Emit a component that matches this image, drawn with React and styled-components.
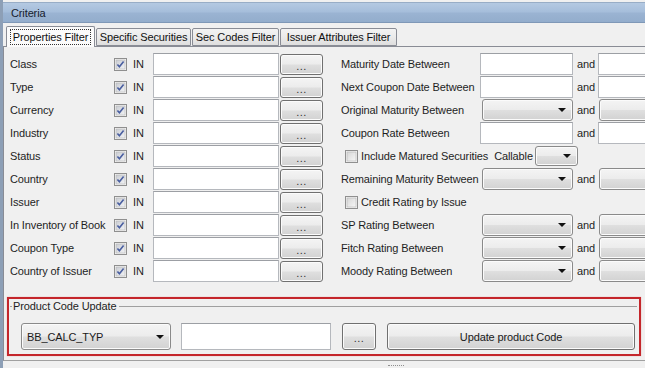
import React from "react";
import styled, { createGlobalStyle } from "styled-components";

const GlobalStyle = createGlobalStyle`
  html, body {
    margin: 0;
    padding: 0;
    background: #f0f0f0;
  }
  body {
    font-family: "Liberation Sans", Arial, sans-serif;
    font-size: 11px;
    letter-spacing: -0.12px;
    color: #1e1e1e;
  }
`;

const Frame = styled.div`
  width: 645px;
  height: 368px;
  box-sizing: border-box;
  overflow: hidden;
  padding-top: 2px;
  border-left: 3px solid #8d9fb6;
  background: #f0f0f0;
`;

const TitleBar = styled.div`
  height: 19px;
  display: flex;
  align-items: center;
  padding-left: 8px;
  border-top: 1px solid #98adc6;
  border-bottom: 1px solid #7f98b7;
  background: linear-gradient(#b4c9e2, #a6bedb 45%, #9ab3d2 55%, #93adcc);
  color: #17212d;
`;

const TabStrip = styled.div`
  display: flex;
  align-items: flex-end;
  gap: 1px;
  height: 20px;
  margin-top: 3px;
  padding-left: 3px;
`;

const Tab = styled.div`
  position: relative;
  z-index: 1;
  box-sizing: border-box;
  width: ${(p) => p.$w}px;
  height: ${(p) => (p.$active ? 21 : 18)}px;
  margin-bottom: ${(p) => (p.$active ? -1 : 0)}px;
  border: 1px solid #898c95;
  border-bottom: ${(p) => (p.$active ? "none" : "1px solid #898c95")};
  border-radius: 2px 2px 0 0;
  background: ${(p) =>
    p.$active ? "#fbfbfb" : "linear-gradient(#f3f3f3, #ebebeb 50%, #dedede)"};
  display: flex;
  align-items: center;
  justify-content: center;
  padding-bottom: ${(p) => (p.$active ? 1 : 0)}px;
  white-space: nowrap;
  color: #111;
`;

const FocusText = styled.span`
  outline: 1px dotted #333;
  outline-offset: 1px;
  padding: 0 1px;
`;

const TabBody = styled.div`
  box-sizing: border-box;
  height: 315px;
  border-top: 1px solid #898c95;
  border-left: 1px solid #898c95;
  border-bottom: 1px solid #a0a0a0;
  padding: 6px 0 0 3px;
`;

const Columns = styled.div`
  display: flex;
  padding-left: 3px;
`;

const Column = styled.div`
  display: flex;
  flex-direction: column;
  gap: 1px;
  margin-left: ${(p) => p.$ml || 0}px;
`;

const Row = styled.div`
  display: flex;
  align-items: center;
  height: 22px;
  white-space: nowrap;
`;

const FieldLabel = styled.span`
  width: ${(p) => p.$w}px;
  flex: none;
  white-space: nowrap;
  overflow: visible;
`;

const Plain = styled.span`
  margin-left: ${(p) => p.$ml || 0}px;
  flex: none;
`;

const InText = styled.span`
  width: 14px;
  margin-left: 6px;
  flex: none;
`;

const TextInput = styled.div`
  box-sizing: border-box;
  flex: none;
  width: ${(p) => p.$w}px;
  height: ${(p) => p.$h || 22}px;
  margin-left: ${(p) => p.$ml || 0}px;
  background: #fff;
  border: 1px solid #b5b8bd;
  border-top-color: #9c9fa4;
`;

const Btn = styled.div`
  box-sizing: border-box;
  flex: none;
  width: ${(p) => p.$w}px;
  height: ${(p) => p.$h || 21}px;
  margin-left: ${(p) => p.$ml || 0}px;
  border: 1px solid #707070;
  border-radius: 3px;
  background: linear-gradient(#f4f4f4, #ececec 48%, #dfdfdf 52%, #d2d2d2);
  box-shadow: inset 0 0 0 1px #fbfbfb;
  display: flex;
  align-items: center;
  justify-content: center;
  color: #1a1a1a;
  white-space: nowrap;
`;

const Dots = styled.span`
  padding-top: 3px;
  letter-spacing: 0.5px;
  color: #333;
`;

const ComboBox = styled(Btn)`
  justify-content: space-between;
  padding: 0 6px 0 5px;
  border-color: #8a8a8a;
`;

const Arrow = styled.span`
  width: 0;
  height: 0;
  border-left: 4px solid transparent;
  border-right: 4px solid transparent;
  border-top: 4px solid #111;
  margin-left: auto;
`;

const And = styled.span`
  width: 21px;
  padding-left: 4px;
  flex: none;
`;

const RedFrame = styled.div`
  box-sizing: border-box;
  width: 634px;
  height: 59px;
  margin-top: 15px;
  border: 2px solid #c4262b;
  box-shadow: 0 0 1px #e89a9c;
`;

const Legend = styled.div`
  display: flex;
  align-items: center;
  height: 14px;
  padding-left: 1px;
  margin-right: 2px;

  &::before {
    content: "";
    width: 2px;
    border-top: 1px solid #a0a0a0;
    margin-right: 1px;
  }
  &::after {
    content: "";
    flex: 1;
    border-top: 1px solid #a0a0a0;
    margin-left: 2px;
  }
`;

const ControlsRow = styled.div`
  display: flex;
  align-items: center;
  margin-top: 10px;
  padding-left: 12px;
`;

const Grip = styled.div`
  width: 16px;
  margin: 4px 0 0 385px;
  border-top: 1px dotted #8f8f8f;
`;

const CheckBox = ({ checked, ml = 0 }) => (
  <svg width="13" height="13" viewBox="0 0 13 13" style={{ marginLeft: ml, flex: "none" }}>
    <defs>
      <linearGradient id={checked ? "cbOn" : "cbOff"} x1="0" y1="0" x2="1" y2="1">
        <stop offset="0" stopColor={checked ? "#c9ccd2" : "#d6d6d6"} />
        <stop offset="1" stopColor={checked ? "#f2f3f5" : "#f7f7f7"} />
      </linearGradient>
    </defs>
    <rect x="0.5" y="0.5" width="12" height="12" fill="#f4f4f4" stroke="#8f8f8f" />
    <rect x="2" y="2" width="9" height="9" fill={`url(#${checked ? "cbOn" : "cbOff"})`} stroke="#b4b4b4" strokeWidth="0.6" />
    {checked && (
      <path d="M3.4 6.4 L5.4 8.8 L9.6 3.4" fill="none" stroke="#4a5fa0" strokeWidth="1.6" />
    )}
  </svg>
);

const leftRows = [
  "Class",
  "Type",
  "Currency",
  "Industry",
  "Status",
  "Country",
  "Issuer",
  "In Inventory of Book",
  "Coupon Type",
  "Country of Issuer",
];

const rightRows = [
  { kind: "input", label: "Maturity Date Between" },
  { kind: "input", label: "Next Coupon Date Between" },
  { kind: "combo", label: "Original Maturity Between" },
  { kind: "input", label: "Coupon Rate Between" },
  { kind: "matured" },
  { kind: "combo", label: "Remaining Maturity Between" },
  { kind: "check", label: "Credit Rating by Issue" },
  { kind: "combo", label: "SP Rating Between" },
  { kind: "combo", label: "Fitch Rating Between" },
  { kind: "combo", label: "Moody Rating Between" },
];

const tabs = [
  { name: "Properties Filter", w: 89, active: true },
  { name: "Specific Securities", w: 95 },
  { name: "Sec Codes Filter", w: 87 },
  { name: "Issuer Attributes Filter", w: 117 },
];

const Combo = ({ w, h, ml, children }) => (
  <ComboBox $w={w} $h={h} $ml={ml}>
    {children}
    <Arrow />
  </ComboBox>
);

const RightRow = ({ row }) => {
  if (row.kind === "input") {
    return (
      <Row>
        <FieldLabel $w={139}>{row.label}</FieldLabel>
        <TextInput $w={93} />
        <And>and</And>
        <TextInput $w={93} />
      </Row>
    );
  }
  if (row.kind === "combo") {
    return (
      <Row>
        <FieldLabel $w={141}>{row.label}</FieldLabel>
        <Combo w={91} h={22} />
        <And>and</And>
        <Combo w={91} h={22} ml={1} />
      </Row>
    );
  }
  if (row.kind === "matured") {
    return (
      <Row>
        <CheckBox ml={4} />
        <Plain $ml={3}>Include Matured Securities</Plain>
        <Plain $ml={6}>Callable</Plain>
        <Combo w={43} h={20} ml={2} />
      </Row>
    );
  }
  return (
    <Row>
      <CheckBox ml={4} />
      <Plain $ml={3}>{row.label}</Plain>
    </Row>
  );
};

export default function App() {
  return (
    <>
      <GlobalStyle />
      <Frame>
        <TitleBar>Criteria</TitleBar>
        <TabStrip>
          {tabs.map((t) => (
            <Tab key={t.name} $w={t.w} $active={t.active}>
              {t.active ? <FocusText>{t.name}</FocusText> : t.name}
            </Tab>
          ))}
        </TabStrip>
        <TabBody>
          <Columns>
            <Column>
              {leftRows.map((label) => (
                <Row key={label}>
                  <FieldLabel $w={104}>{label}</FieldLabel>
                  <CheckBox checked />
                  <InText>IN</InText>
                  <TextInput $w={126} $ml={6} />
                  <Btn $w={43} $ml={1}><Dots>...</Dots></Btn>
                </Row>
              ))}
            </Column>
            <Column $ml={18}>
              {rightRows.map((row, i) => (
                <RightRow key={i} row={row} />
              ))}
            </Column>
          </Columns>
          <RedFrame>
            <Legend>Product Code Update</Legend>
            <ControlsRow>
              <Combo w={150} h={27}>BB_CALC_TYP</Combo>
              <TextInput $w={150} $h={27} $ml={10} />
              <Btn $w={34} $h={27} $ml={11}><Dots>...</Dots></Btn>
              <Btn $w={248} $h={27} $ml={11}>Update product Code</Btn>
            </ControlsRow>
          </RedFrame>
        </TabBody>
        <Grip />
      </Frame>
    </>
  );
}
